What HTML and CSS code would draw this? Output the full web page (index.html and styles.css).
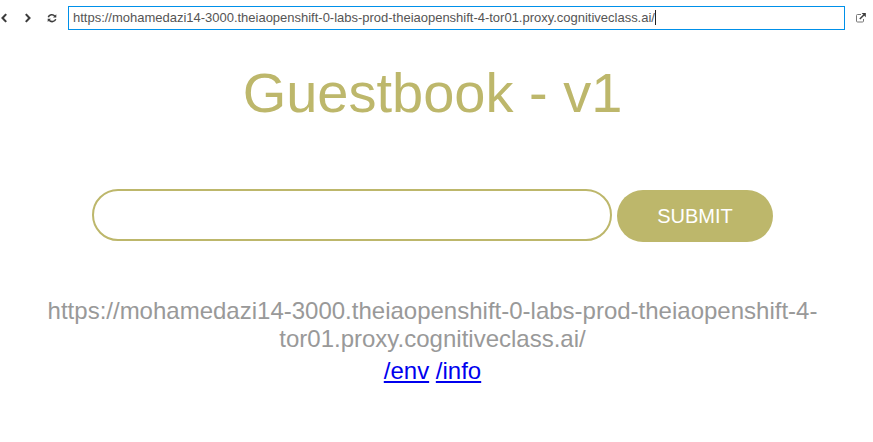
FILE: index.html
```html
<!DOCTYPE html>
<html lang="en">
<head>
<meta charset="utf-8">
<title>Guestbook - v1</title>
<link rel="stylesheet" href="styles.css">
</head>
<body>
<nav class="toolbar">
  <svg class="icon back" viewBox="0 0 10 12"><path d="M6.200 2.100 2.500 6 6.200 9.900" /></svg>
  <svg class="icon forward" viewBox="0 0 10 12"><path d="M2.800 2.100 6.500 6 2.800 9.900" /></svg>
  <svg class="icon refresh" viewBox="0 0 10 12"><path d="M1.300 5.300A3.600 3.200 0 0 1 7.800 4.200M8.700 7.100A3.600 3.200 0 0 1 2.200 8.200" /><path class="solid" d="M9.300 2.300v3.300H6zM.7 10.100V6.800H4z" /></svg>
  <div class="address"><span class="url">https://mohamedazi14-3000.theiaopenshift-0-labs-prod-theiaopenshift-4-tor01.proxy.cognitiveclass.ai/</span></div>
  <svg class="icon external" viewBox="0 0 12 12"><path d="M6 2.500H2.500Q1.500 2.500 1.500 3.500v5.500Q1.500 10 2.500 10h5Q8.500 10 8.500 9V7" /><path class="arrow" d="M4.800 7 8.800 3" /><path class="solid" d="M6.600 1h4.200v4.200z" /></svg>
</nav>
<main>
  <h1>Guestbook - v1</h1>
  <form class="entry"><input type="text" aria-label="Entry"><button type="button">SUBMIT</button></form>
  <div class="host">https://mohamedazi14-3000.theiaopenshift-0-labs-prod-theiaopenshift-4-<br>tor01.proxy.cognitiveclass.ai/</div>
  <div class="links"><a href="/env">/env</a> <a href="/info">/info</a></div>
</main>
</body>
</html>
```
FILE: styles.css
```css
* { box-sizing: border-box; }
body { margin: 0; background: #fff; font-family: "Liberation Sans", Arial, sans-serif; overflow: hidden; }
.toolbar { display: flex; align-items: center; height: 36px; }
.icon { width: 10px; height: 12px; flex: none; fill: none; stroke: #3c3c3c; stroke-width: 2.1; }
.icon .solid { fill: #3c3c3c; stroke: none; }
.forward { margin-left: 13px; }
.refresh { margin-left: 14px; stroke-width: 1.5; }
.address { width: 777px; height: 24px; margin-left: 11px; padding: 0 4px 2px; border: 1px solid #0090e9; display: flex; align-items: center; }
.url { font-size: 13px; line-height: 15px; letter-spacing: -0.01px; color: #555; white-space: nowrap; border-right: 1px solid #222; }
.external { width: 12px; margin-left: 10px; stroke-width: 1; stroke: #777; }
.external .arrow { stroke: #444; stroke-width: 1.6; }
main { width: 865px; text-align: center; }
h1 { margin: 25px 0 0; font-size: 56px; line-height: 64px; font-weight: 400; color: #bdb76b; }
.entry { display: flex; gap: 5px; margin: 64px 0 0 92px; }
input { width: 520px; height: 52px; border: 2px solid #bdb76b; border-radius: 26px; padding: 0 20px; outline: none; }
button { width: 156px; height: 52px; margin-top: 1px; border: 0; border-radius: 26px; background: #bdb76b; color: #fff; font: 20px "Liberation Sans", Arial, sans-serif; }
.host { margin-top: 55px; font-size: 24px; line-height: 28px; color: #999; }
.links { margin-top: 4px; font-size: 24px; line-height: 28px; }
a { color: #00e; }
```
